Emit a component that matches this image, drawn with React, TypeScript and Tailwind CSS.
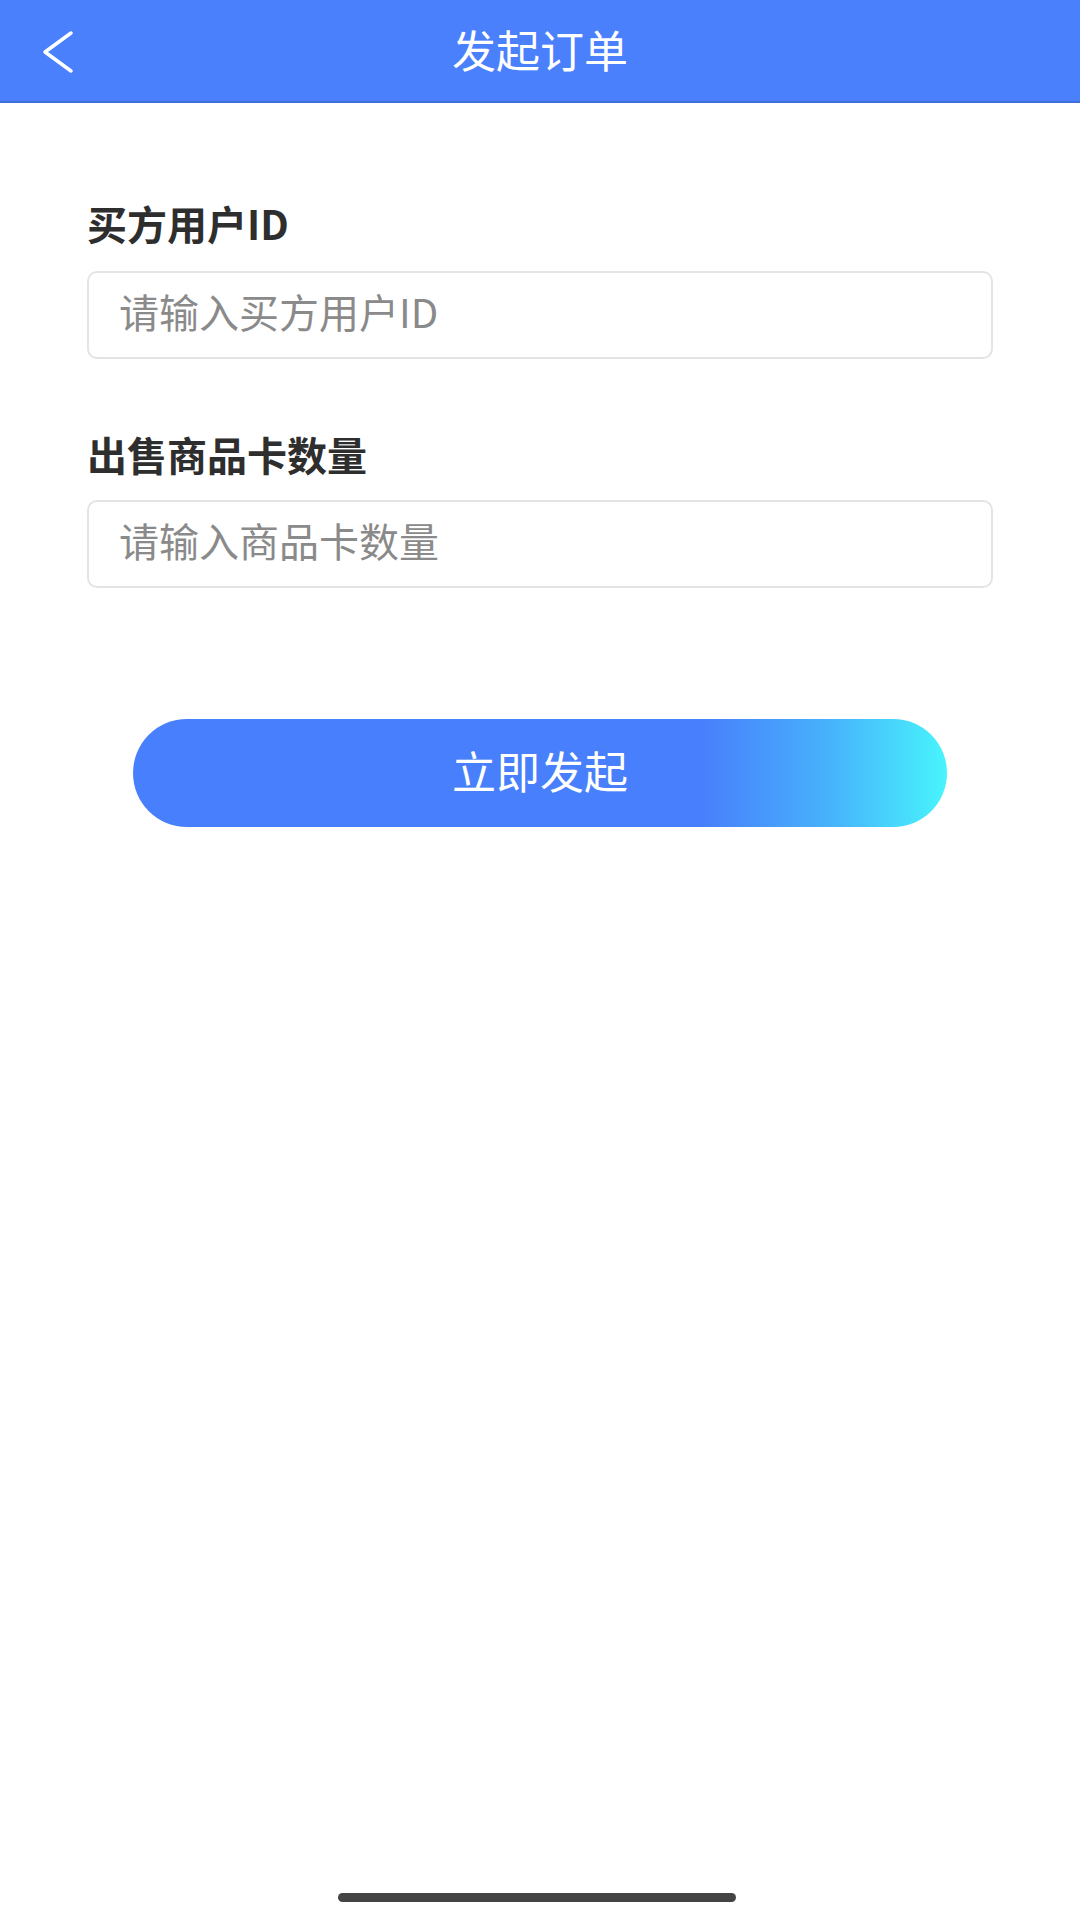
import React from "react";

export default function App() {
  const font = { fontFamily: '"Noto Sans CJK SC", "Noto Sans", sans-serif' };
  return (
    <div className="relative w-[1080px] min-h-[1920px] bg-white" style={font}>
      <header className="relative h-[103px] bg-[#4a80fc] border-b-2 border-[#3f6fd8] flex items-center justify-center">
        <svg
          className="absolute left-[40px] top-[28px]"
          width="40"
          height="48"
          viewBox="0 0 40 48"
          fill="none"
        >
          <polyline
            points="31,5 5,24 31,43"
            stroke="white"
            strokeWidth="3.5"
            strokeLinecap="round"
            strokeLinejoin="round"
          />
        </svg>
        <h1 className="text-white text-[44px] leading-none font-normal pb-[3px]">发起订单</h1>
      </header>

      <main className="px-[87px] flex flex-col">
        <label className="mt-[100px] text-[40px] leading-[40px] font-bold text-[#2e2e2e]">买方用户ID</label>
        <div className="mt-[28px] h-[88px] rounded-[10px] border-2 border-[#e4e4e4] flex items-center px-[30px]">
          <span className="text-[40px] leading-none text-[#8a8a8a] pb-[8px]">请输入买方用户ID</span>
        </div>

        <label className="mt-[75px] text-[40px] leading-[40px] font-bold text-[#2e2e2e]">出售商品卡数量</label>
        <div className="mt-[26px] h-[88px] rounded-[10px] border-2 border-[#e4e4e4] flex items-center px-[30px]">
          <span className="text-[40px] leading-none text-[#8a8a8a] pb-[8px]">请输入商品卡数量</span>
        </div>

        <button className="mt-[131px] mx-[46px] h-[108px] rounded-full bg-[linear-gradient(90deg,#487ffc_0%,#487ffc_70%,#47b4fb_86%,#48f4fc_100%)] flex items-center justify-center">
          <span className="text-white text-[44px] leading-none pb-[6px]">立即发起</span>
        </button>
      </main>

      <div className="absolute left-[338px] top-[1893px] w-[398px] h-[9px] rounded-full bg-[#444444]" />
    </div>
  );
}
